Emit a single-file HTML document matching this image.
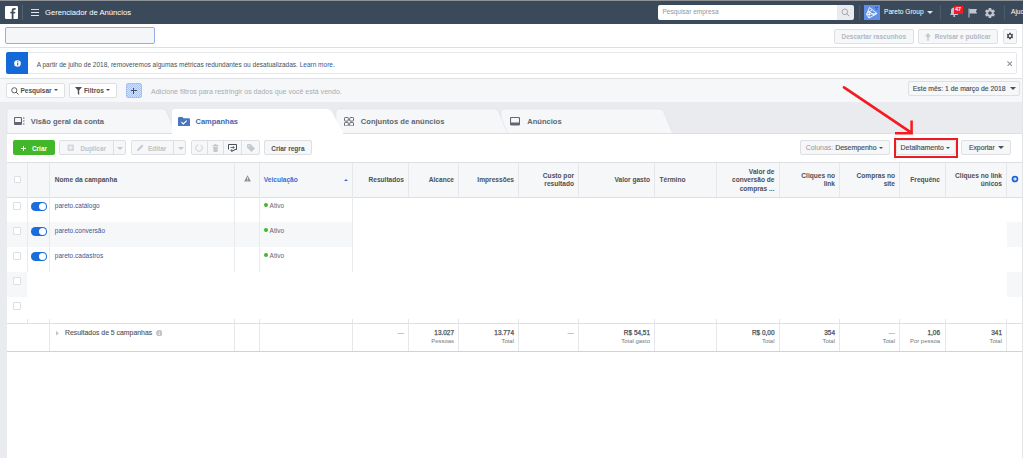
<!DOCTYPE html>
<html><head><meta charset="utf-8">
<style>
*{box-sizing:border-box;margin:0;padding:0}
html,body{width:1024px;height:458px;overflow:hidden;background:#fff;font-family:"Liberation Sans",sans-serif;color:#4b4f56}
.a{position:absolute}
.t{position:absolute;white-space:nowrap;line-height:1}
.btn{position:absolute;background:#f6f7f9;border:1px solid #dddfe2;border-radius:2px}
.vl{position:absolute;width:1px;background:#dddfe2}
.hl{position:absolute;height:1px;background:#dddfe2}
.b{font-weight:bold}
</style></head><body>
<!-- top line -->
<div class="a" style="left:0;top:0;width:1023px;height:1px;background:#8e9196"></div>
<!-- top bar -->
<div class="a" style="left:0;top:1px;width:1023px;height:23px;background:#3b4a5b"></div>

<!-- row 2 -->
<div class="a" style="left:5px;top:27px;width:150px;height:17px;background:#f5f6f7;border:1px solid #94afe4;border-radius:2px"></div>
<div class="hl" style="left:0;top:47px;width:1022px"></div>

<!-- notification -->
<div class="a" style="left:6px;top:52px;width:1011px;height:22px;border:1px solid #e5e7ea;border-radius:2px;background:#fff"></div>
<div class="a" style="left:6px;top:52px;width:22px;height:22px;background:#1469d6;border-radius:2px 0 0 2px"></div>
<div class="hl" style="left:0;top:78px;width:1022px"></div>

<!-- filter bar -->
<div class="a" style="left:0;top:79px;width:1022px;height:23px;background:#f6f7f9"></div>

<!-- grey area -->
<div class="a" style="left:0;top:102px;width:1022px;height:356px;background:#e9ebee"></div>



<!-- TABS -->
<svg class="a" style="left:0;top:100px" width="1022" height="34" viewBox="0 100 1022 34">
 <path d="M501 134V112Q501 109 504 109H659Q662 109 663.5 111.5L673 134Z" fill="#f6f7f9" stroke="#dddfe2" stroke-width="0.6"/>
 <path d="M336 134V112Q336 109 339 109H494Q497 109 498.5 111.5L508 134Z" fill="#f6f7f9" stroke="#dddfe2" stroke-width="0.6"/>
 <path d="M7 134V112Q7 109 10 109H162Q165 109 166.5 111.5L176 134Z" fill="#f6f7f9" stroke="#dddfe2" stroke-width="0.6"/>
 <path d="M172 134V112Q172 109 175 109H327Q330 109 331.5 111.5L344 134Z" fill="#fff"/>
</svg>
<div class="a" style="left:7px;top:133px;width:165px;height:1px;background:#dddfe2"></div>
<div class="a" style="left:343px;top:133px;width:679px;height:1px;background:#dddfe2"></div>
<div class="a" style="left:7px;top:134px;width:1015px;height:324px;background:#fff"></div>
<!-- tab icons/text -->
<svg class="a" style="left:14px;top:117px" width="11" height="8" viewBox="0 0 11 8"><rect x="0.5" y="0.5" width="7" height="7" rx="1" fill="none" stroke="#606770" stroke-width="1.1"/><rect x="0.5" y="5" width="7" height="2.5" fill="#606770"/><path d="M9 1H10.5M9 4H10.5M9 7H10.5" stroke="#606770" stroke-width="1"/></svg>
<div class="t b" style="left:30.8px;top:118px;font-size:7.56px;color:#606770">Visão geral da conta</div>
<svg class="a" style="left:178px;top:116.5px" width="12" height="9.5" viewBox="0 0 12 9.5"><path d="M0 1.2Q0 0 1.2 0H4.5L5.5 1.3H10.8Q12 1.3 12 2.5V8.3Q12 9.5 10.8 9.5H1.2Q0 9.5 0 8.3Z" fill="#4a76c0"/><path d="M3.5 5.2L5.3 7L8.7 3.6" stroke="#fff" stroke-width="1.1" fill="none"/></svg>
<div class="t b" style="left:195.5px;top:118px;font-size:7.51px;color:#4267b2">Campanhas</div>
<svg class="a" style="left:344px;top:116.5px" width="10" height="9.5" viewBox="0 0 10 9.5"><rect x="0.5" y="0.5" width="3.8" height="3.6" rx="0.8" fill="none" stroke="#606770" stroke-width="1"/><rect x="5.7" y="0.5" width="3.8" height="3.6" rx="0.8" fill="none" stroke="#606770" stroke-width="1"/><rect x="0.5" y="5.4" width="3.8" height="3.6" rx="0.8" fill="none" stroke="#606770" stroke-width="1"/><rect x="5.7" y="5.4" width="3.8" height="3.6" rx="0.8" fill="none" stroke="#606770" stroke-width="1"/></svg>
<div class="t b" style="left:360.8px;top:118px;font-size:7.57px;color:#606770">Conjuntos de anúncios</div>
<svg class="a" style="left:510px;top:117px" width="10" height="8.5" viewBox="0 0 10 8.5"><rect x="0.5" y="0.5" width="9" height="7.5" rx="1" fill="none" stroke="#606770" stroke-width="1.1"/><rect x="0.5" y="5.5" width="9" height="2.5" fill="#606770"/></svg>
<div class="t b" style="left:527.2px;top:118px;font-size:7.57px;color:#606770">Anúncios</div>

<!-- TOOLBAR -->
<div class="a" style="left:13px;top:140.4px;width:41.6px;height:15px;background:#42b72a;border-radius:2px"></div>
<div class="a" style="left:21px;top:147.9px;width:5px;height:1.1px;background:#fff"></div>
<div class="a" style="left:22.95px;top:145.9px;width:1.1px;height:5px;background:#fff"></div>
<div class="t b" style="left:32px;top:145.5px;font-size:6.4px;color:#fff">Criar</div>

<div class="btn" style="left:59.2px;top:140.4px;width:67.2px;height:15px"></div>
<div class="vl" style="left:113.3px;top:140.4px;height:15px"></div>
<svg class="a" style="left:66.5px;top:144px" width="8" height="8" viewBox="0 0 8 8"><rect x="0.5" y="0.5" width="6.5" height="6.5" rx="1" fill="#d5d8dc"/><path d="M3.75 2V5.5M2 3.75H5.5" stroke="#f6f7f9" stroke-width="1"/></svg>
<div class="t b" style="left:80.4px;top:145.5px;font-size:6.4px;color:#bec3c9">Duplicar</div>
<div class="a" style="left:117.4px;top:146.5px;width:0;height:0;border-left:3px solid transparent;border-right:3px solid transparent;border-top:3px solid #c5c9ce"></div>

<div class="btn" style="left:131.3px;top:140.4px;width:55.1px;height:15px"></div>
<div class="vl" style="left:173.3px;top:140.4px;height:15px"></div>
<svg class="a" style="left:136.8px;top:144px" width="7" height="7" viewBox="0 0 7 7"><path d="M0 7L0.5 5L5 0.5L6.5 2L2 6.5Z" fill="#c5c9ce"/></svg>
<div class="t b" style="left:148px;top:145.5px;font-size:6.49px;color:#bec3c9">Editar</div>
<div class="a" style="left:177.8px;top:146.5px;width:0;height:0;border-left:3px solid transparent;border-right:3px solid transparent;border-top:3px solid #c5c9ce"></div>

<div class="btn" style="left:191.1px;top:140.4px;width:68.6px;height:15px"></div>
<div class="vl" style="left:207.4px;top:140.4px;height:15px"></div>
<div class="vl" style="left:223.2px;top:140.4px;height:15px"></div>
<div class="vl" style="left:241.2px;top:140.4px;height:15px"></div>
<svg class="a" style="left:195px;top:144px" width="8" height="8" viewBox="0 0 8 8"><path d="M5.6 1.1A3.3 3.3 0 1 1 3.2 0.8" stroke="#c5c9ce" stroke-width="0.9" fill="none"/></svg>
<svg class="a" style="left:211.5px;top:144px" width="7" height="8" viewBox="0 0 7 8"><rect x="0.5" y="1" width="6" height="1" fill="#c5c9ce"/><rect x="2.5" y="0" width="2" height="1" fill="#c5c9ce"/><path d="M1 2.5H6L5.5 8H1.5Z" fill="#c5c9ce"/></svg>
<svg class="a" style="left:228px;top:143.5px" width="9" height="8.5" viewBox="0 0 9 8.5"><path d="M0.5 5.5V0.5H8.5V5.5H6.5L4.5 7.5" stroke="#4b4f56" stroke-width="1" fill="none"/><path d="M2.5 3.5H6M5 2.2L6.3 3.5L5 4.8M6.5 6.5H3M4 5.2L2.7 6.5L4 7.8" stroke="#4b4f56" stroke-width="0.8" fill="none"/></svg>
<svg class="a" style="left:246.5px;top:144px" width="8" height="8" viewBox="0 0 8 8"><path d="M0 0.8V3.5L4.5 8L8 4.5L3.5 0H0.8Z" fill="#c5c9ce"/><circle cx="1.9" cy="1.9" r="0.7" fill="#f6f7f9"/></svg>

<div class="btn" style="left:264.4px;top:140.4px;width:47.3px;height:15px"></div>
<div class="t b" style="left:271.2px;top:145.5px;font-size:6.53px;color:#4b4f56">Criar regra</div>

<div class="btn" style="left:799.9px;top:140.4px;width:90px;height:15px"></div>
<div class="t" style="left:805.7px;top:145px;font-size:6.97px;color:#4b4f56;-webkit-text-stroke:0.15px #4b4f56"><span style="color:#90949c;-webkit-text-stroke:0">Colunas:</span> Desempenho</div>
<div class="a" style="left:879.2px;top:147px;width:0;height:0;border-left:2.2px solid transparent;border-right:2.2px solid transparent;border-top:2.5px solid #4b4f56"></div>

<div class="btn" style="left:896px;top:140.4px;width:60px;height:15px"></div>
<div class="t" style="left:900.6px;top:145px;font-size:6.94px;color:#4b4f56;-webkit-text-stroke:0.15px #4b4f56">Detalhamento</div>
<div class="a" style="left:946.3px;top:147px;width:0;height:0;border-left:2.2px solid transparent;border-right:2.2px solid transparent;border-top:2.5px solid #4b4f56"></div>
<div class="a" style="left:893.7px;top:137.7px;width:64.5px;height:20.2px;border:2px solid #ec1c24"></div>

<div class="btn" style="left:961.4px;top:140.4px;width:50.1px;height:15px"></div>
<div class="t" style="left:968.9px;top:145px;font-size:6.83px;color:#4b4f56;-webkit-text-stroke:0.15px #4b4f56">Exportar</div>
<div class="a" style="left:998.3px;top:146.3px;width:0;height:0;border-left:3.2px solid transparent;border-right:3.2px solid transparent;border-top:3.5px solid #4b4f56"></div>

<!-- TABLE HEADER -->
<div class="a" style="left:7px;top:162px;width:1015px;height:36px;background:#f6f7f9;border-top:1px solid #dddfe2;border-bottom:1px solid #dddfe2"></div>
<div class="vl" style="left:27px;top:163px;height:34px;background:#e5e7ea"></div>
<div class="vl" style="left:49px;top:163px;height:34px;background:#e5e7ea"></div>
<div class="vl" style="left:234px;top:163px;height:34px;background:#e5e7ea"></div>
<div class="vl" style="left:259px;top:163px;height:34px;background:#e5e7ea"></div>
<div class="vl" style="left:352px;top:163px;height:34px;background:#e5e7ea"></div>
<div class="vl" style="left:408px;top:163px;height:34px;background:#e5e7ea"></div>
<div class="vl" style="left:458px;top:163px;height:34px;background:#e5e7ea"></div>
<div class="vl" style="left:518px;top:163px;height:34px;background:#e5e7ea"></div>
<div class="vl" style="left:578px;top:163px;height:34px;background:#e5e7ea"></div>
<div class="vl" style="left:654px;top:163px;height:34px;background:#e5e7ea"></div>
<div class="vl" style="left:716px;top:163px;height:34px;background:#e5e7ea"></div>
<div class="vl" style="left:779px;top:163px;height:34px;background:#e5e7ea"></div>
<div class="vl" style="left:839px;top:163px;height:34px;background:#e5e7ea"></div>
<div class="vl" style="left:899px;top:163px;height:34px;background:#e5e7ea"></div>
<div class="vl" style="left:945px;top:163px;height:34px;background:#e5e7ea"></div>
<div class="vl" style="left:1006px;top:163px;height:34px;background:#e5e7ea"></div>
<div class="a" style="left:13.5px;top:175.5px;width:7.5px;height:7.5px;background:#fff;border:1px solid #dddfe2;border-radius:1px"></div>
<div class="t b" style="font-size:6.6px;color:#4b4f56;line-height:8.7px;left:54.8px;top:176px;font-size:6.6px">Nome da campanha</div>
<svg class="a" style="left:243.5px;top:175px" width="7" height="7" viewBox="0 0 7 7"><path d="M3.5 0.3L6.9 6.6H0.1Z" fill="#8d9197"/><path d="M3.5 2.3V4.4" stroke="#f6f7f9" stroke-width="0.8"/><circle cx="3.5" cy="5.5" r="0.45" fill="#f6f7f9"/></svg>
<div class="t b" style="font-size:6.6px;color:#4b4f56;line-height:8.7px;left:263.7px;top:176px;color:#3b6dd4">Veiculação</div>
<div class="a" style="left:343.5px;top:178.5px;width:0;height:0;border-left:2px solid transparent;border-right:2px solid transparent;border-bottom:2.5px solid #3b6dd4"></div>
<div class="t b" style="font-size:6.6px;color:#4b4f56;line-height:8.7px;right:620px;top:176px;text-align:right;">Resultados</div>
<div class="t b" style="font-size:6.6px;color:#4b4f56;line-height:8.7px;right:570px;top:176px;text-align:right;">Alcance</div>
<div class="t b" style="font-size:6.6px;color:#4b4f56;line-height:8.7px;right:510px;top:176px;text-align:right;">Impressões</div>
<div class="t b" style="font-size:6.6px;color:#4b4f56;line-height:8.7px;right:450px;top:171.6px;text-align:right;">Custo por<br>resultado</div>
<div class="t b" style="font-size:6.6px;color:#4b4f56;line-height:8.7px;right:374px;top:176px;text-align:right;">Valor gasto</div>
<div class="t b" style="font-size:6.6px;color:#4b4f56;line-height:8.7px;left:659.5px;top:176px">Término</div>
<div class="t b" style="font-size:6.6px;color:#4b4f56;line-height:8.7px;right:249.5px;top:167.6px;text-align:right;">Valor de<br>conversão de<br>compras ...</div>
<div class="t b" style="font-size:6.6px;color:#4b4f56;line-height:8.7px;right:189px;top:171.6px;text-align:right;">Cliques no<br>link</div>
<div class="t b" style="font-size:6.6px;color:#4b4f56;line-height:8.7px;right:129px;top:171.6px;text-align:right;">Compras no<br>site</div>
<div class="t b" style="font-size:6.6px;color:#4b4f56;line-height:8.7px;right:84px;top:176px;text-align:right;">Frequênc</div>
<div class="t b" style="font-size:6.6px;color:#4b4f56;line-height:8.7px;right:22px;top:171.6px;text-align:right;">Cliques no link<br>únicos</div>
<svg class="a" style="left:1011px;top:174.8px" width="8" height="8" viewBox="0 0 8 8"><circle cx="4" cy="4" r="2.6" fill="#a9c3f0" stroke="#1a5fd6" stroke-width="1.5"/><path d="M3.2 4L4.6 2.8V5.2Z" fill="#fff"/></svg>
<!-- ROWS -->
<div class="a" style="left:7px;top:222px;width:345px;height:25px;background:#f6f7f9"></div>
<div class="a" style="left:7px;top:272px;width:20px;height:25px;background:#f6f7f9"></div>
<div class="a" style="left:1006.5px;top:222px;width:15px;height:25px;background:#f6f7f9"></div>
<div class="a" style="left:1006.5px;top:272px;width:15px;height:25px;background:#f6f7f9"></div>

<div class="vl" style="left:27px;top:197px;height:75px;background:#e9ebee"></div>
<div class="vl" style="left:49px;top:197px;height:75px;background:#e9ebee"></div>
<div class="vl" style="left:234px;top:197px;height:75px;background:#e9ebee"></div>
<div class="vl" style="left:259px;top:197px;height:75px;background:#e9ebee"></div>
<div class="vl" style="left:352px;top:197px;height:75px;background:#e9ebee"></div>
<div class="a" style="left:13.2px;top:202.2px;width:7.6px;height:7.6px;background:#fff;border:1px solid #dddfe2;border-radius:1px"></div>
<div class="a" style="left:31px;top:202px;width:16px;height:8.6px;background:#1b6dd9;border-radius:4.3px"></div>
<div class="a" style="left:38.6px;top:202.8px;width:7px;height:7px;background:#fff;border-radius:50%"></div>
<div class="t" style="left:54.8px;top:203.2px;font-size:6.5px;color:#365899">pareto.catálogo</div>
<div class="a" style="left:263.5px;top:203px;width:4px;height:4px;background:#42b72a;border-radius:50%"></div>
<div class="t" style="left:269.6px;top:202.9px;font-size:6.48px;color:#606770">Ativo</div>
<div class="a" style="left:13.2px;top:227.2px;width:7.6px;height:7.6px;background:#fff;border:1px solid #dddfe2;border-radius:1px"></div>
<div class="a" style="left:31px;top:227px;width:16px;height:8.6px;background:#1b6dd9;border-radius:4.3px"></div>
<div class="a" style="left:38.6px;top:227.8px;width:7px;height:7px;background:#fff;border-radius:50%"></div>
<div class="t" style="left:54.8px;top:228.2px;font-size:6.5px;color:#365899">pareto.conversão</div>
<div class="a" style="left:263.5px;top:228px;width:4px;height:4px;background:#42b72a;border-radius:50%"></div>
<div class="t" style="left:269.6px;top:227.9px;font-size:6.48px;color:#606770">Ativo</div>
<div class="a" style="left:13.2px;top:252.2px;width:7.6px;height:7.6px;background:#fff;border:1px solid #dddfe2;border-radius:1px"></div>
<div class="a" style="left:31px;top:252px;width:16px;height:8.6px;background:#1b6dd9;border-radius:4.3px"></div>
<div class="a" style="left:38.6px;top:252.8px;width:7px;height:7px;background:#fff;border-radius:50%"></div>
<div class="t" style="left:54.8px;top:253.2px;font-size:6.5px;color:#365899">pareto.cadastros</div>
<div class="a" style="left:263.5px;top:253px;width:4px;height:4px;background:#42b72a;border-radius:50%"></div>
<div class="t" style="left:269.6px;top:252.9px;font-size:6.48px;color:#606770">Ativo</div>
<div class="a" style="left:13.2px;top:277.2px;width:7.6px;height:7.6px;background:#fff;border:1px solid #dddfe2;border-radius:1px"></div>
<div class="a" style="left:13.2px;top:302.2px;width:7.6px;height:7.6px;background:#fff;border:1px solid #dddfe2;border-radius:1px"></div>
<!-- FOOTER -->
<div class="a" style="left:7px;top:323px;width:1015px;height:29px;border-top:1px solid #dddfe2;border-bottom:1px solid #cfd2d6"></div>
<div class="vl" style="left:27px;top:319px;height:4px;background:#e5e7ea"></div>
<div class="vl" style="left:49px;top:319px;height:32px;background:#e5e7ea"></div>
<div class="vl" style="left:234px;top:319px;height:32px;background:#e5e7ea"></div>
<div class="vl" style="left:259px;top:319px;height:32px;background:#e5e7ea"></div>
<div class="vl" style="left:352px;top:319px;height:32px;background:#e5e7ea"></div>
<div class="vl" style="left:408px;top:319px;height:32px;background:#e5e7ea"></div>
<div class="vl" style="left:458px;top:319px;height:32px;background:#e5e7ea"></div>
<div class="vl" style="left:518px;top:319px;height:32px;background:#e5e7ea"></div>
<div class="vl" style="left:578px;top:319px;height:32px;background:#e5e7ea"></div>
<div class="vl" style="left:654px;top:319px;height:32px;background:#e5e7ea"></div>
<div class="vl" style="left:716px;top:319px;height:32px;background:#e5e7ea"></div>
<div class="vl" style="left:779px;top:319px;height:32px;background:#e5e7ea"></div>
<div class="vl" style="left:839px;top:319px;height:32px;background:#e5e7ea"></div>
<div class="vl" style="left:899px;top:319px;height:32px;background:#e5e7ea"></div>
<div class="vl" style="left:945px;top:319px;height:32px;background:#e5e7ea"></div>
<div class="vl" style="left:1006px;top:319px;height:32px;background:#e5e7ea"></div>
<svg class="a" style="left:56.3px;top:331px" width="3" height="4.5" viewBox="0 0 3 4.5"><path d="M0 0L3 2.25L0 4.5Z" fill="#bec3c9"/></svg>
<div class="t" style="left:65px;top:329.5px;font-size:6.88px;color:#4b4f56;-webkit-text-stroke:0.1px #4b4f56">Resultados de 5 campanhas</div>
<svg class="a" style="left:156px;top:330px" width="6.4" height="6.4" viewBox="0 0 7 7"><circle cx="3.5" cy="3.5" r="3.4" fill="#bec3c9"/><path d="M3.5 3V5.5" stroke="#fff" stroke-width="1"/><circle cx="3.5" cy="1.8" r="0.55" fill="#fff"/></svg>
<div class="t" style="font-size:6.45px;color:#4b4f56;text-align:right;-webkit-text-stroke:0.25px #4b4f56;right:620px;top:329.7px"><span style="color:#90949c;-webkit-text-stroke:0">—</span></div>
<div class="t" style="font-size:6.45px;color:#4b4f56;text-align:right;-webkit-text-stroke:0.25px #4b4f56;right:570px;top:329.7px">13.027</div><div class="t" style="font-size:5.95px;color:#74787e;text-align:right;right:570px;top:339.1px">Pessoas</div>
<div class="t" style="font-size:6.45px;color:#4b4f56;text-align:right;-webkit-text-stroke:0.25px #4b4f56;right:510px;top:329.7px">13.774</div><div class="t" style="font-size:5.95px;color:#74787e;text-align:right;right:510px;top:339.1px">Total</div>
<div class="t" style="font-size:6.45px;color:#4b4f56;text-align:right;-webkit-text-stroke:0.25px #4b4f56;right:450px;top:329.7px"><span style="color:#90949c;-webkit-text-stroke:0">—</span></div>
<div class="t" style="font-size:6.45px;color:#4b4f56;text-align:right;-webkit-text-stroke:0.25px #4b4f56;right:374px;top:329.7px">R$ 54,51</div><div class="t" style="font-size:5.95px;color:#74787e;text-align:right;right:374px;top:339.1px">Total gasto</div>
<div class="t" style="font-size:6.45px;color:#4b4f56;text-align:right;-webkit-text-stroke:0.25px #4b4f56;right:249.5px;top:329.7px">R$ 0,00</div><div class="t" style="font-size:5.95px;color:#74787e;text-align:right;right:249.5px;top:339.1px">Total</div>
<div class="t" style="font-size:6.45px;color:#4b4f56;text-align:right;-webkit-text-stroke:0.25px #4b4f56;right:189px;top:329.7px">354</div><div class="t" style="font-size:5.95px;color:#74787e;text-align:right;right:189px;top:339.1px">Total</div>
<div class="t" style="font-size:6.45px;color:#4b4f56;text-align:right;-webkit-text-stroke:0.25px #4b4f56;right:129px;top:329.7px"><span style="color:#90949c;-webkit-text-stroke:0">—</span></div><div class="t" style="font-size:5.95px;color:#74787e;text-align:right;right:129px;top:339.1px">Total</div>
<div class="t" style="font-size:6.45px;color:#4b4f56;text-align:right;-webkit-text-stroke:0.25px #4b4f56;right:84px;top:329.7px">1,06</div><div class="t" style="font-size:5.95px;color:#74787e;text-align:right;right:84px;top:339.1px">Por pessoa</div>
<div class="t" style="font-size:6.45px;color:#4b4f56;text-align:right;-webkit-text-stroke:0.25px #4b4f56;right:22px;top:329.7px">341</div><div class="t" style="font-size:5.95px;color:#74787e;text-align:right;right:22px;top:339.1px">Total</div>

<!-- TOPBAR CONTENT -->
<svg class="a" style="left:5px;top:6px" width="13" height="13" viewBox="0 0 13 13"><rect x="0" y="0" width="13" height="13" rx="1.2" fill="#fff"/><path d="M7.6 13.2V4.6C7.6 3.4 8.3 2.8 9.5 2.8H10.6" stroke="#3b4a5b" stroke-width="1.75" fill="none"/><path d="M5.3 6.6H10.2" stroke="#3b4a5b" stroke-width="1.5"/></svg>
<div class="a" style="left:22px;top:5px;width:1px;height:15px;background:#55626f"></div>
<div class="a" style="left:31px;top:9px;width:8px;height:1px;background:#d5d9de"></div>
<div class="a" style="left:31px;top:12px;width:8px;height:1px;background:#e4e6ea"></div>
<div class="a" style="left:31px;top:15px;width:8px;height:1px;background:#e4e6ea"></div>
<div class="t" style="left:45px;top:8.5px;font-size:7.66px;color:#fff">Gerenciador de Anúncios</div>
<div class="a" style="left:658px;top:5px;width:179px;height:15px;background:#fff;border-radius:2px 0 0 2px"></div>
<div class="t" style="left:662.5px;top:9px;font-size:6.5px;color:#90949c">Pesquisar empresa</div>
<div class="a" style="left:837px;top:5px;width:17px;height:15px;background:#e9ebee;border-radius:0 2px 2px 0"></div>
<svg class="a" style="left:841px;top:8px" width="9" height="9" viewBox="0 0 9 9"><circle cx="3.8" cy="3.8" r="2.8" stroke="#9ca1a8" stroke-width="0.9" fill="none"/><path d="M5.8 5.8L8.2 8.2" stroke="#9ca1a8" stroke-width="1"/></svg>
<div class="a" style="left:859px;top:5px;width:1px;height:15px;background:#4d5a68"></div>
<div class="a" style="left:864px;top:5px;width:15.5px;height:15px;background:#6090e6"></div>
<svg class="a" style="left:864px;top:5px" width="16" height="15" viewBox="864 5 16 15"><path d="M869.5 7.5L877 13.5L869 18L866.5 14.5Z M868 10.8L874.5 15.3 M867.2 13L872 10 M869.3 12L869 18 M866.8 14.5L876.8 13.5" stroke="#fff" stroke-width="0.9" fill="none" stroke-linejoin="round"/><circle cx="875.5" cy="7.4" r="0.8" fill="#2a5fc8"/><circle cx="877.5" cy="7.4" r="0.8" fill="#2a5fc8"/><circle cx="876.5" cy="9.3" r="0.8" fill="#2a5fc8"/></svg>
<div class="t" style="left:884px;top:9px;font-size:6.6px;color:#fff">Pareto Group</div>
<div class="a" style="left:927px;top:11px;width:0;height:0;border-left:3px solid transparent;border-right:3px solid transparent;border-top:3px solid #dfe3e8"></div>
<div class="a" style="left:940px;top:5px;width:1px;height:15px;background:#4d5a68"></div>
<svg class="a" style="left:949px;top:6px" width="11" height="11" viewBox="0 0 11 11"><path d="M1 9H9.5L8.5 7.5V4.5C8.5 2.8 7 1.5 5.2 1.5S2 2.8 2 4.5V7.5Z" fill="#c2c6cc"/><circle cx="5.2" cy="10" r="1" fill="#c2c6cc"/></svg>
<div class="a" style="left:954px;top:6px;width:9px;height:7.7px;background:#ee1c25;border-radius:0"></div>
<div class="t b" style="left:955px;top:6.8px;font-size:5.5px;color:#fff">47</div>
<svg class="a" style="left:968px;top:8px" width="10" height="10" viewBox="0 0 10 10"><path d="M1 0.5V9.5" stroke="#c2c6cc" stroke-width="1"/><path d="M1.5 1H9L8 3.2L9 5.5H1.5Z" fill="#c2c6cc"/></svg>
<svg class="a" style="left:984px;top:6.5px" width="12" height="12" viewBox="0 0 24 24"><path fill="#c2c6cc" d="M19.4 13c.04-.3.06-.65.06-1s-.02-.7-.06-1l2.1-1.65c.2-.15.25-.42.12-.64l-2-3.46c-.12-.22-.38-.3-.6-.22l-2.5 1c-.52-.4-1.08-.73-1.7-.98l-.37-2.65C14.4 2.18 14.2 2 13.95 2h-4c-.25 0-.45.18-.5.42l-.37 2.65c-.62.25-1.18.58-1.7.98l-2.5-1c-.22-.08-.48 0-.6.22l-2 3.46c-.13.22-.07.49.12.64L4.5 11c-.04.3-.06.65-.06 1s.02.7.06 1l-2.1 1.65c-.2.15-.25.42-.12.64l2 3.46c.12.22.38.3.6.22l2.5-1c.52.4 1.08.73 1.7.98l.37 2.65c.05.24.25.42.5.42h4c.25 0 .45-.18.5-.42l.37-2.65c.62-.25 1.18-.58 1.7-.98l2.5 1c.22.08.48 0 .6-.22l2-3.46c.13-.22.07-.49-.12-.64L19.4 13zM12 15.5c-1.93 0-3.5-1.57-3.5-3.5s1.57-3.5 3.5-3.5 3.5 1.57 3.5 3.5-1.57 3.5-3.5 3.5z"/></svg>
<div class="a" style="left:1004px;top:5px;width:1px;height:15px;background:#4d5a68"></div>
<div class="t" style="left:1011px;top:9px;font-size:6.6px;color:#fff">Ajuda</div>
<div class="a" style="left:1023px;top:0;width:1px;height:458px;background:#fff"></div><div class="a" style="left:1022px;top:24px;width:1px;height:434px;background:#fff"></div>
<div class="a" style="left:1022px;top:24px;width:1px;height:434px;background:#e4e6ea"></div>

<!-- ROW2 buttons -->
<div class="btn" style="left:834px;top:29px;width:80px;height:15px"></div>
<div class="t b" style="left:841.5px;top:33.5px;font-size:6.5px;color:#b4b8be">Descartar rascunhos</div>
<div class="btn" style="left:918px;top:29px;width:80px;height:15px"></div>
<svg class="a" style="left:924.5px;top:32.5px" width="6" height="8" viewBox="0 0 6 8"><path d="M3 0L6 3.2H4.2V5.5H1.8V3.2H0Z M1.8 6.3H4.2V7.6H1.8Z" fill="#c5c9ce"/></svg>
<div class="t b" style="left:934.8px;top:33.5px;font-size:6.5px;color:#b4b8be">Revisar e publicar</div>
<div class="btn" style="left:1002.5px;top:29px;width:14px;height:15px"></div>
<svg class="a" style="left:1005.5px;top:32.3px" width="8" height="8" viewBox="0 0 24 24"><path fill="#4b4f56" d="M19.4 13c.04-.3.06-.65.06-1s-.02-.7-.06-1l2.1-1.65c.2-.15.25-.42.12-.64l-2-3.46c-.12-.22-.38-.3-.6-.22l-2.5 1c-.52-.4-1.080-.73-1.7-.98l-.37-2.65C14.4 2.180 14.2 2 13.950 2h-4c-.25 0-.45.18-.5.42l-.37 2.65c-.62.25-1.18.58-1.7.98l-2.5-1c-.22-.08-.48 0-.6.22l-2 3.46c-.13.22-.07.49.12.64L4.5 11c-.04.3-.06.65-.06 1s.02.7.06 1l-2.1 1.65c-.2.15-.25.42-.12.64l2 3.46c.12.22.38.3.6.22l2.5-1c.52.4 1.08.73 1.7.98l.37 2.65c.05.24.25.42.5.42h4c.25 0 .45-.18.5-.42l.37-2.65c.62-.25 1.18-.58 1.7-.98l2.5 1c.22.08.48 0 .6-.22l2-3.46c.13-.22.07-.49-.12-.64L19.4 13zM12 15.5c-1.930 0-3.5-1.570-3.5-3.5s1.57-3.5 3.5-3.5 3.5 1.57 3.5 3.5-1.57 3.5-3.5 3.5z"/></svg>

<!-- notification content -->
<svg class="a" style="left:13.5px;top:60px" width="7" height="7" viewBox="0 0 7 7"><circle cx="3.5" cy="3.5" r="3.3" fill="#fff"/><circle cx="3.8" cy="1.9" r="0.65" fill="#1469d6"/><path d="M3.7 3V5.6" stroke="#1469d6" stroke-width="1.1"/></svg>
<div class="t" style="left:36.7px;top:61.6px;font-size:6.53px;color:#4b4f56">A partir de julho de 2018, removeremos algumas métricas redundantes ou desatualizadas. <span style="color:#365899">Learn more.</span></div>
<svg class="a" style="left:1006.5px;top:60.7px" width="5.5" height="5.5" viewBox="0 0 5.5 5.5"><path d="M0.4 0.4L5.1 5.1M5.1 0.4L0.4 5.1" stroke="#8d9197" stroke-width="1.05"/></svg>

<!-- filter bar content -->
<div class="btn" style="left:5.5px;top:83px;width:59px;height:15px;background:#fff"></div>
<svg class="a" style="left:11px;top:86.5px" width="8" height="8" viewBox="0 0 8 8"><circle cx="3.3" cy="3.3" r="2.6" stroke="#4b4f56" stroke-width="0.9" fill="none"/><path d="M5.2 5.2L7.5 7.5" stroke="#4b4f56" stroke-width="1"/></svg>
<div class="t b" style="left:20.5px;top:88.4px;font-size:6.5px;color:#4b4f56">Pesquisar</div>
<div class="a" style="left:53.8px;top:89.3px;width:0;height:0;border-left:2.4px solid transparent;border-right:2.4px solid transparent;border-top:2.8px solid #4b4f56"></div>
<div class="btn" style="left:68.8px;top:83px;width:48px;height:15px;background:#fff"></div>
<svg class="a" style="left:75px;top:86.5px" width="7" height="8" viewBox="0 0 7 8"><path d="M0 0H7L4.2 3.3V8L2.8 7V3.3Z" fill="#4b4f56"/></svg>
<div class="t b" style="left:83.9px;top:88.4px;font-size:6.5px;color:#4b4f56">Filtros</div>
<div class="a" style="left:106px;top:89.3px;width:0;height:0;border-left:2.4px solid transparent;border-right:2.4px solid transparent;border-top:2.8px solid #4b4f56"></div>
<div class="a" style="left:125.5px;top:83px;width:16px;height:15px;background:repeating-conic-gradient(#aac2f0 0 25%,#dfe2e8 0 50%) 0 0/2px 2px;border:1px solid #a9c0ee;border-radius:2px"></div>
<div class="a" style="left:130.5px;top:90px;width:6px;height:1px;background:#4b4f56"></div>
<div class="a" style="left:133px;top:87.5px;width:1px;height:6px;background:#4b4f56"></div>
<div class="t" style="left:151px;top:88px;font-size:7.05px;color:#a8acb2">Adicione filtros para restringir os dados que você está vendo.</div>
<div class="btn" style="left:907.7px;top:81px;width:112px;height:15px"></div>
<div class="t" style="left:912.8px;top:86px;font-size:6.82px;color:#4b4f56;-webkit-text-stroke:0.15px #4b4f56">Este mês: 1 de março de 2018</div>
<div class="a" style="left:1010px;top:87.2px;width:0;height:0;border-left:3px solid transparent;border-right:3px solid transparent;border-top:3.2px solid #4b4f56"></div>
<!-- ARROW -->
<svg class="a" style="left:0;top:0" width="1024" height="458" viewBox="0 0 1024 458"><path d="M844 87.3L911.2 132.6" stroke="#f41a1f" stroke-width="2.7" stroke-linecap="round"/><path d="M911.6 120.5V133.2H895" stroke="#f41a1f" stroke-width="2.5" fill="none"/></svg>
</body></html>
